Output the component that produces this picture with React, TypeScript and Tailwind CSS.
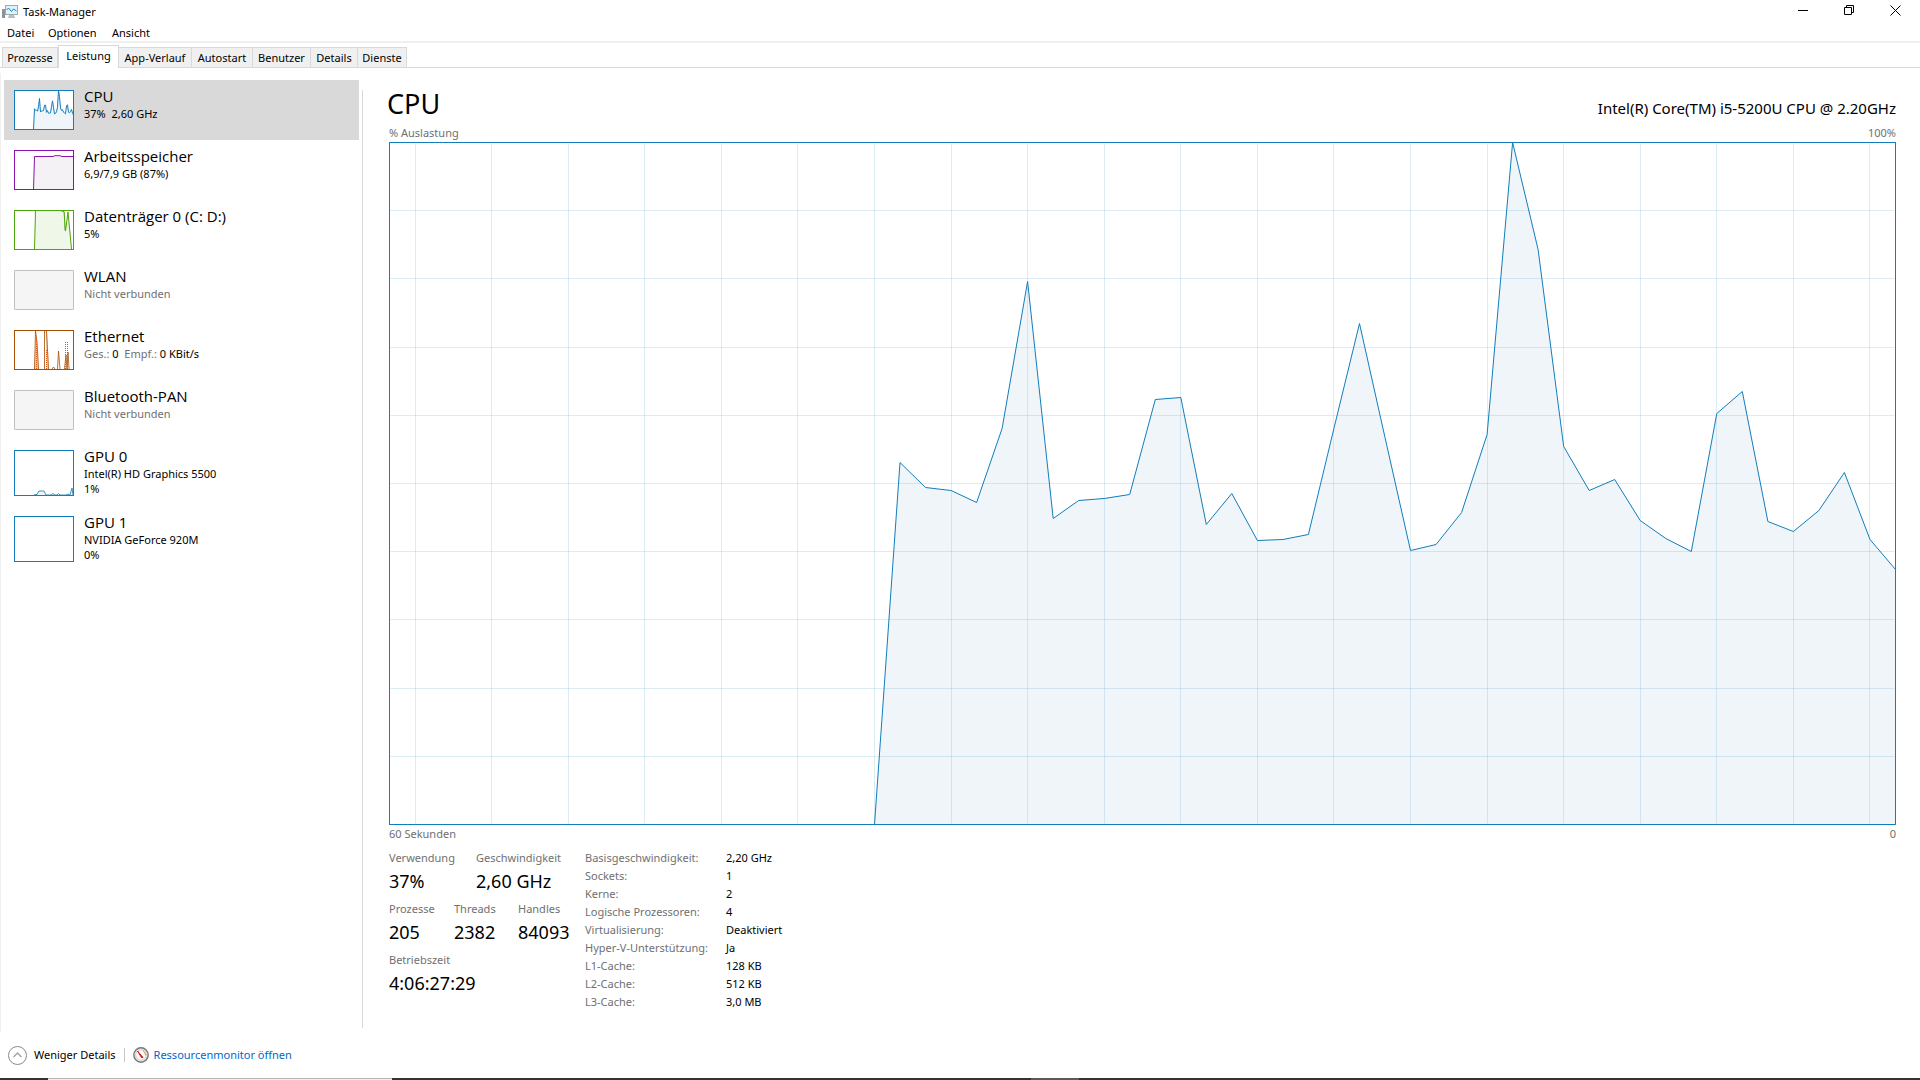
import React from "react";

const CHART_W = 1506;
const CHART_H = 682;
const SAMPLES = 60;
const STEP = CHART_W / (SAMPLES - 1);
const FIRST = 19;

// Load samples, measured upwards from the base line of the chart.
const load = [
  0, 362, 337, 334, 322, 396, 543, 306, 324, 326, 330, 425, 427, 300, 331, 284, 285, 290, 396, 501, 387, 274, 280, 312,
  390, 682, 575, 378, 334, 345, 304, 286, 273, 411, 433, 303, 293, 314, 352, 285, 255,
];

const linePoints = load.map((v, i) => `${((FIRST + i) * STEP).toFixed(1)},${CHART_H - v}`).join(" ");
const areaPoints = `${linePoints} ${CHART_W},${CHART_H}`;
const gridX = Array.from({ length: 20 }, (_, i) => Math.round((1 + i * 3) * STEP));
const gridY = Array.from({ length: 9 }, (_, i) => Math.round(((i + 1) * CHART_H) / 10));

function LoadChart() {
  return (
    <div className="relative min-h-[300px] flex-1 border border-[#117dbb] bg-white">
      <svg
        className="absolute -inset-px h-[calc(100%+2px)] w-[calc(100%+2px)]"
        viewBox={`-0.5 -0.5 ${CHART_W + 1} ${CHART_H + 1}`}
        preserveAspectRatio="none"
        role="img"
        aria-label="CPU-Auslastung"
      >
        <polygon points={areaPoints} fill="#f0f5fa" />
        <g stroke="#117dbb" strokeOpacity={0.15}>
          {gridX.map((x) => (
            <line key={x} x1={x} x2={x} y1={1} y2={CHART_H - 1} />
          ))}
          {gridY.map((y) => (
            <line key={y} x1={1} x2={CHART_W - 1} y1={y} y2={y} />
          ))}
        </g>
        <polyline points={linePoints} fill="none" stroke="#117dbb" vectorEffect="non-scaling-stroke" />
        <rect x={0} y={0} width={CHART_W} height={CHART_H} fill="none" stroke="#117dbb" vectorEffect="non-scaling-stroke" />
      </svg>
    </div>
  );
}

function CpuThumb() {
  return (
    <svg className="h-10 w-15 shrink-0" viewBox="0 0 60 40" aria-hidden="true">
      <rect x={0.5} y={0.5} width={59} height={39} fill="#fff" />
      <svg x={0.5} y={0.5} width={59} height={39} viewBox={`0 0 ${CHART_W} ${CHART_H}`} preserveAspectRatio="none">
        <polygon points={areaPoints} fill="#f0f5fa" />
        <polyline points={linePoints} fill="none" stroke="#117dbb" vectorEffect="non-scaling-stroke" />
      </svg>
      <rect x={0.5} y={0.5} width={59} height={39} fill="none" stroke="#117dbb" />
    </svg>
  );
}

function MemoryThumb() {
  return (
    <svg className="h-10 w-15 shrink-0" viewBox="0 0 60 40" aria-hidden="true">
      <path d="M19.500 40L20.500 6.500H60V40Z" fill="#f4f2f4" />
      <path d="M19.500 40L20.500 6.500H39L41 5.700H46L48 6.500H60" fill="none" stroke="#8b12ae" />
      <rect x={0.5} y={0.5} width={59} height={39} fill="none" stroke="#8b12ae" />
    </svg>
  );
}

function DiskThumb() {
  return (
    <svg className="h-10 w-15 shrink-0" viewBox="0 0 60 40" aria-hidden="true">
      <path d="M20.500 40L21.500 0.500H50L51.500 21L54 2L58 40Z" fill="#eff7e9" />
      <path d="M20.500 40L21.500 0.500H46L50 1.500L51.500 21L54 2L57.500 39" fill="none" stroke="#4da60c" />
      <path d="M50.500 2V20" stroke="#4da60c" strokeOpacity={0.5} />
      <rect x={0.5} y={0.5} width={59} height={39} fill="none" stroke="#4da60c" />
    </svg>
  );
}

function IdleThumb() {
  return <span className="h-10 w-15 shrink-0 rounded-[1px] border border-[#bfbfbf] bg-[#f5f5f5]" />;
}

function EthernetThumb() {
  return (
    <svg className="h-10 w-15 shrink-0" viewBox="0 0 60 40" aria-hidden="true">
      <rect x={0.5} y={0.5} width={59} height={39} fill="#fff" />
      <g fill="#a74f01" fillOpacity={0.25}>
        <path d="M20 40L22 1L25 40Z" />
        <path d="M31.500 1H33L35 40H33Z" />
      </g>
      <g fill="none" stroke="#a74f01" strokeOpacity={0.8}>
        <path d="M20.500 39L21.500 1L23 12L24.500 39" />
        <path d="M30.500 1V39" />
        <path d="M32.500 1L34.500 39" />
        <path d="M38 39L39.500 37L41 39" />
        <path d="M43.500 39L44.500 21L46 39" />
        <path d="M50.500 39L52 25L53 39L54 22L55 39" />
      </g>
      <g fill="none" stroke="#d4571c" strokeDasharray="1 1">
        <path d="M22.500 8V39M32.500 20V39M51.500 12V39M53.500 12V39" />
      </g>
      <rect x={0.5} y={0.5} width={59} height={39} fill="none" stroke="#a74f01" />
    </svg>
  );
}

function GpuThumb({ line }: { line?: string }) {
  return (
    <svg className="h-[46px] w-15 shrink-0" viewBox="0 0 60 46" aria-hidden="true">
      <rect x={0.5} y={0.5} width={59} height={45} fill="#fff" stroke="#117dbb" />
      {line && <path d={line} fill="#f0f6fa" stroke="#117dbb" strokeOpacity={0.8} />}
    </svg>
  );
}

type Item = { title: string; thumb: React.ReactNode; lines: React.ReactNode[]; active?: boolean };

const idle = <span className="text-[#707070]">Nicht verbunden</span>;

const items: Item[] = [
  { title: "CPU", thumb: <CpuThumb />, lines: ["37%\u00a0 2,60 GHz"], active: true },
  { title: "Arbeitsspeicher", thumb: <MemoryThumb />, lines: ["6,9/7,9 GB (87%)"] },
  { title: "Datenträger 0 (C: D:)", thumb: <DiskThumb />, lines: ["5%"] },
  { title: "WLAN", thumb: <IdleThumb />, lines: [idle] },
  {
    title: "Ethernet",
    thumb: <EthernetThumb />,
    lines: [
      <>
        <span className="text-[#707070]">Ges.:</span> 0&nbsp; <span className="text-[#707070]">Empf.:</span> 0 KBit/s
      </>,
    ],
  },
  { title: "Bluetooth-PAN", thumb: <IdleThumb />, lines: [idle] },
  {
    title: "GPU 0",
    thumb: <GpuThumb line="M20 45L21 44.500H23L25 41H30L32 45L37 45L39 43.500L41 45H43L44.500 43.500L46 45H52L54 44L56 45L58 38L59 45" />,
    lines: ["Intel(R) HD Graphics 5500", "1%"],
  },
  { title: "GPU 1", thumb: <GpuThumb />, lines: ["NVIDIA GeForce 920M", "0%"] },
];

const tabs = [
  { label: "Prozesse", width: "w-14" },
  { label: "Leistung", width: "w-[61px]", active: true },
  { label: "App-Verlauf", width: "w-[73px]" },
  { label: "Autostart", width: "w-[61px]" },
  { label: "Benutzer", width: "w-[58px]" },
  { label: "Details", width: "w-[47px]" },
  { label: "Dienste", width: "w-[49px]" },
];

const facts = [
  ["Basisgeschwindigkeit:", "2,20 GHz"],
  ["Sockets:", "1"],
  ["Kerne:", "2"],
  ["Logische Prozessoren:", "4"],
  ["Virtualisierung:", "Deaktiviert"],
  ["Hyper-V-Unterstützung:", "Ja"],
  ["L1-Cache:", "128 KB"],
  ["L2-Cache:", "512 KB"],
  ["L3-Cache:", "3,0 MB"],
];

function Stat({ label, value, width }: { label: string; value: string; width?: string }) {
  return (
    <div className={`whitespace-nowrap ${width ?? ""}`}>
      <dt className="text-[11px] leading-[18px] text-[#707070]">{label}</dt>
      <dd className="text-[18px] leading-7">{value}</dd>
    </div>
  );
}

function TitleBar() {
  return (
    <header className="flex h-6 items-start justify-between">
      <div className="flex items-center gap-[5px] pl-[2px]">
        <svg className="h-4 w-4" viewBox="0 0 16 16" aria-hidden="true">
          <rect x={0} y={5} width={3} height={9} fill="#8d9296" />
          <rect x={0.7} y={6} width={1} height={2} fill="#6abf4b" />
          <rect x={3.5} y={1.500} width={12} height={9} fill="#dff3fb" stroke="#a3a8ac" />
          <path d="M4.500 6L6.500 4L9.500 7.500L11.500 5L14.500 7" fill="none" stroke="#1d86c4" />
          <path d="M7 11H12L13 14H6Z" fill="#b9bdc0" />
        </svg>
        <h1 className="text-[11px] leading-6">Task-Manager</h1>
      </div>
      <div className="flex pr-[2px]">
        <button type="button" aria-label="Minimieren" className="flex h-[21px] w-[46px] items-center justify-center">
          <svg className="h-[11px] w-[11px]" viewBox="0 0 11 11"><path d="M0 5.500H10" stroke="#000" /></svg>
        </button>
        <button type="button" aria-label="Verkleinern" className="flex h-[21px] w-[46px] items-center justify-center">
          <svg className="h-[11px] w-[11px]" viewBox="0 0 11 11"><path d="M0.500 2.500H7.500V9.500H0.500ZM2.500 2.500V0.500H9.500V7.500H7.500" fill="none" stroke="#000" /></svg>
        </button>
        <button type="button" aria-label="Schließen" className="flex h-[21px] w-[46px] items-center justify-center">
          <svg className="h-[11px] w-[11px]" viewBox="0 0 11 11"><path d="M0.500 0.500L10.500 10.500M10.500 0.500L0.500 10.500" stroke="#000" /></svg>
        </button>
      </div>
    </header>
  );
}

export default function App() {
  return (
    <div className="flex min-h-screen flex-col bg-white font-['Noto_Sans','Open_Sans',sans-serif] text-[11px] text-black">
      <TitleBar />
      <nav className="flex h-[19px] items-center border-b-2 border-[#f0f0f0] pl-[7px]" aria-label="Menü">
        <button type="button" className="w-[41px] text-left leading-[18px]">Datei</button>
        <button type="button" className="w-16 text-left leading-[18px]">Optionen</button>
        <button type="button" className="text-left leading-[18px]">Ansicht</button>
      </nav>

      <div className="flex h-[25px] items-end border-b border-[#d9d9d9] pl-[2px]" role="tablist">
        {tabs.map((t) =>
          t.active ? (
            <button
              key={t.label}
              type="button"
              role="tab"
              aria-selected="true"
              className={`-mb-px h-[23px] shrink-0 border-x border-t border-[#d9d9d9] bg-white pb-[2px] text-center ${t.width}`}
            >
              {t.label}
            </button>
          ) : (
            <button
              key={t.label}
              type="button"
              role="tab"
              aria-selected="false"
              className={`h-5 shrink-0 border-t border-r border-[#d9d9d9] bg-[#f0f0f0] pt-px text-center whitespace-nowrap first:border-l ${t.width}`}
            >
              {t.label}
            </button>
          ),
        )}
      </div>

      <main className="mt-[5px] flex flex-1 border-l border-[#f0f0f0]">
        <aside className="w-[361px] shrink-0 pt-[7px] pl-[3px]">
          <ul className="w-[355px]">
            {items.map((it) => (
              <li key={it.title}>
                <button
                  type="button"
                  className={`flex w-full items-start gap-[10px] px-[10px] py-[10px] text-left ${it.active ? "bg-[#d9d9d9]" : ""}`}
                >
                  {it.thumb}
                  <span className="-my-[5px] flex flex-col">
                    <span className="font-['Open_Sans','Noto_Sans',sans-serif] text-[15px] leading-[22px]">{it.title}</span>
                    {it.lines.map((l, i) => (
                      <span key={i} className="h-[15px] leading-[13px]">{l}</span>
                    ))}
                  </span>
                </button>
              </li>
            ))}
          </ul>
        </aside>

        <section className="mt-[17px] mb-1 flex flex-1 flex-col border-l border-[#d9d9d9] pr-6 pl-[26px]">
          <div className="-mt-1 flex h-9 items-center justify-between">
            <h2 className="-ml-[2px] text-[27px] leading-9">CPU</h2>
            <p className="pt-2 text-[15px] leading-6">Intel(R) Core(TM) i5-5200U CPU @ 2.20GHz</p>
          </div>
          <div className="flex h-5 items-center justify-between pt-[2px] text-[#707070]">
            <span>% Auslastung</span>
            <span>100%</span>
          </div>
          <LoadChart />
          <div className="flex h-6 items-start justify-between leading-[18px] text-[#707070]">
            <span>60 Sekunden</span>
            <span>0</span>
          </div>
          <div className="flex items-start pb-[17px]">
            <dl className="flex w-[196px] shrink-0 flex-col gap-[5px]">
              <div className="flex">
                <Stat label="Verwendung" value="37%" width="w-[87px]" />
                <Stat label="Geschwindigkeit" value="2,60 GHz" />
              </div>
              <div className="flex">
                <Stat label="Prozesse" value="205" width="w-[65px]" />
                <Stat label="Threads" value="2382" width="w-16" />
                <Stat label="Handles" value="84093" />
              </div>
              <Stat label="Betriebszeit" value="4:06:27:29" />
            </dl>
            <table className="text-left leading-[18px] whitespace-nowrap">
              <tbody>
                {facts.map(([k, v]) => (
                  <tr key={k}>
                    <th scope="row" className="w-[141px] p-0 font-normal text-[#707070]">{k}</th>
                    <td className="p-0">{v}</td>
                  </tr>
                ))}
              </tbody>
            </table>
          </div>
        </section>
      </main>

      <footer className="flex h-[46px] items-center pl-2">
        <button type="button" className="flex items-center gap-[7px]">
          <svg className="h-[19px] w-[19px]" viewBox="0 0 19 19" aria-hidden="true">
            <circle cx={9.5} cy={9.5} r={9} fill="#fff" stroke="#8a8a8a" />
            <path d="M5.500 11L9.500 7L13.500 11" fill="none" stroke="#a6a6a6" strokeWidth={1.5} />
          </svg>
          Weniger Details
        </button>
        <span className="ml-2 h-[14px] w-px bg-[#c8c8c8]" />
        <a href="#resmon" className="ml-2 flex items-center gap-[5px] text-[#0066cc]">
          <svg className="h-4 w-4" viewBox="0 0 16 16" aria-hidden="true">
            <circle cx={8} cy={8} r={7.2} fill="#e9e9e4" stroke="#77777a" strokeWidth={1.4} />
            <circle cx={8} cy={8} r={5.2} fill="#fbfbf6" stroke="#bdbdb8" strokeWidth={0.6} />
            <path d="M4.500 4L10 10.500L8.500 10.500Z" fill="#d01616" stroke="#d01616" />
            <path d="M10 3.800A5 5 0 0 1 12.500 8.500" fill="none" stroke="#e08a5a" />
          </svg>
          Ressourcenmonitor öffnen
        </a>
      </footer>
      <div className="flex h-[2px] bg-[#333333]">
        <span className="ml-12 h-full w-[344px] border-t border-[#b8b8b8] bg-[#eeeeee]" />
        <span className="ml-[639px] h-full w-12 bg-[#5a5a5a]" />
      </div>
    </div>
  );
}
